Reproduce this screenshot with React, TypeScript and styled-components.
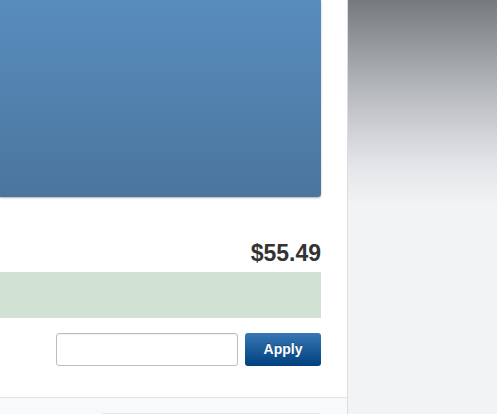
import React from "react";
import styled, { createGlobalStyle } from "styled-components";

const Global = createGlobalStyle`
  html, body { margin: 0; padding: 0; }
  body { font-family: "Liberation Sans", Arial, sans-serif; background: #f2f3f5; }
`;

const Page = styled.div`
  display: flex;
  width: 497px;
  height: 414px;
  overflow: hidden;
`;

const Main = styled.div`
  width: 347px;
  flex: none;
  background: #ffffff;
  border-right: 1px solid #dcdddf;
  display: flex;
  flex-direction: column;
`;

const Content = styled.div`
  padding-right: 26px;
  display: flex;
  flex-direction: column;
`;

const Hero = styled.div`
  height: 197px;
  background: linear-gradient(to bottom, #598dbe 0%, #4a759d 100%);
  border-bottom-right-radius: 3px;
  box-shadow: 0 1px 2px rgba(0, 0, 0, 0.3);
`;

const Price = styled.div`
  margin-top: 43px;
  margin-bottom: 6px;
  text-align: right;
  font-size: 23px;
  line-height: 26px;
  font-weight: bold;
  color: #333333;
`;

const Notice = styled.div`
  height: 46px;
  background: #d1e1d4;
`;

const Form = styled.div`
  margin-top: 15px;
  display: flex;
  justify-content: flex-end;
  gap: 7px;
`;

const Input = styled.input`
  box-sizing: border-box;
  width: 182px;
  height: 33px;
  border: 1px solid #bdbdbd;
  border-radius: 3px;
  background: #fff;
  box-shadow: inset 0 1px 1px rgba(0, 0, 0, 0.06);
  outline: none;
`;

const Button = styled.button`
  box-sizing: border-box;
  width: 76px;
  height: 33px;
  padding: 0 0 1px;
  border: none;
  border-radius: 3px;
  background: linear-gradient(to bottom, #3777b4 0%, #01407f 100%);
  color: #ffffff;
  font-family: "Liberation Sans", Arial, sans-serif;
  font-weight: bold;
  font-size: 14px;
  text-shadow: 0 -1px 0 rgba(0, 0, 0, 0.3);
  cursor: pointer;
`;

const Footer = styled.div`
  margin-top: 31px;
  flex: 1;
  border-top: 1px solid #e1e3e5;
  background: #f8f9fb;
  padding: 15px 26px 0 101px;
`;

const FooterCard = styled.div`
  height: 4px;
  border-top: 1px solid #e6e7e9;
  border-radius: 3px 3px 0 0;
  background: #f4f5f7;
`;

const Side = styled.div`
  flex: 1;
  background: linear-gradient(
    to bottom,
    #76797e 0px,
    #b9bcbf 95px,
    #e4e5e8 165px,
    #f2f3f5 205px,
    #f2f3f5 100%
  );
`;

export default function App() {
  return (
    <>
      <Global />
      <Page>
        <Main>
          <Content>
            <Hero />
            <Price>$55.49</Price>
            <Notice />
            <Form>
              <Input type="text" />
              <Button>Apply</Button>
            </Form>
          </Content>
          <Footer>
            <FooterCard />
          </Footer>
        </Main>
        <Side />
      </Page>
    </>
  );
}
